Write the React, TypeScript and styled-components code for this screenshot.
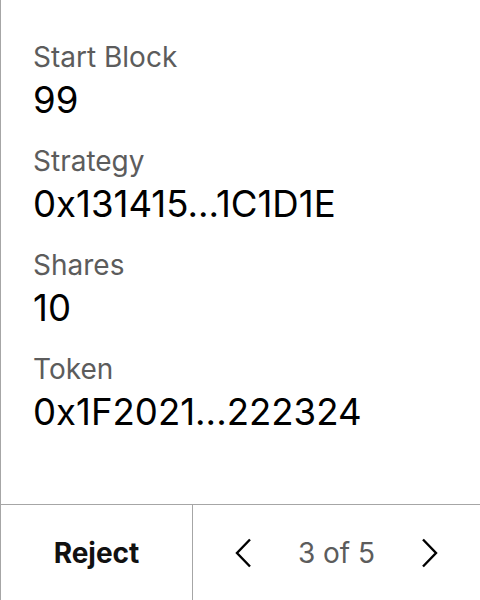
import styled, { createGlobalStyle } from "styled-components";

const GlobalStyle = createGlobalStyle`
  html, body {
    margin: 0;
    padding: 0;
    background: #ffffff;
    font-family: Inter, "Noto Sans", sans-serif;
  }
`;

const Panel = styled.div`
  display: flex;
  flex-direction: column;
  width: 480px;
  height: 600px;
  box-sizing: border-box;
  border-left: 1px solid #a6a6a6;
  overflow: hidden;
`;

const Details = styled.dl`
  flex: 1;
  margin: 0;
  padding: 40px 32px 0;
  display: flex;
  flex-direction: column;
  gap: 22px;
`;

const Field = styled.div`
  display: flex;
  flex-direction: column;
  gap: 4px;
`;

const Label = styled.dt`
  font-size: 28px;
  line-height: 34px;
  color: #5c5c5c;
`;

const Value = styled.dd`
  margin: 0;
  font-size: 36.6px;
  line-height: 44px;
  color: #000000;
`;

const Footer = styled.div`
  display: flex;
  height: 96px;
  box-sizing: border-box;
  border-top: 1px solid #a6a6a6;
`;

const RejectButton = styled.button`
  width: 192px;
  border: none;
  border-right: 1px solid #a6a6a6;
  background: none;
  font-family: inherit;
  font-size: 28px;
  font-weight: 700;
  color: #111111;
  cursor: pointer;
`;

const Pager = styled.div`
  flex: 1;
  display: flex;
  align-items: center;
  justify-content: space-between;
  padding: 0 42px;
`;

const PagerCount = styled.span`
  font-size: 28px;
  color: #5c5c5c;
`;

const ArrowButton = styled.button`
  display: flex;
  padding: 0;
  border: none;
  background: none;
  cursor: pointer;
`;

const Chevron = ({ dir }: { dir: "left" | "right" }) => (
  <svg width="16" height="30" viewBox="0 0 16 30" fill="none">
    <path
      d={dir === "left" ? "M15 1.5L2 15l13 13.5" : "M1 1.5L14 15 1 28.5"}
      stroke="#000"
      strokeWidth="2.4"
    />
  </svg>
);

const fields = [
  { label: "Start Block", value: "99" },
  { label: "Strategy", value: "0x131415...1C1D1E" },
  { label: "Shares", value: "10" },
  { label: "Token", value: "0x1F2021...222324" },
];

export default function App() {
  return (
    <>
      <GlobalStyle />
      <Panel>
        <Details>
          {fields.map((f) => (
            <Field key={f.label}>
              <Label>{f.label}</Label>
              <Value>{f.value}</Value>
            </Field>
          ))}
        </Details>
        <Footer>
          <RejectButton>Reject</RejectButton>
          <Pager>
            <ArrowButton aria-label="Previous">
              <Chevron dir="left" />
            </ArrowButton>
            <PagerCount>3 of 5</PagerCount>
            <ArrowButton aria-label="Next">
              <Chevron dir="right" />
            </ArrowButton>
          </Pager>
        </Footer>
      </Panel>
    </>
  );
}
